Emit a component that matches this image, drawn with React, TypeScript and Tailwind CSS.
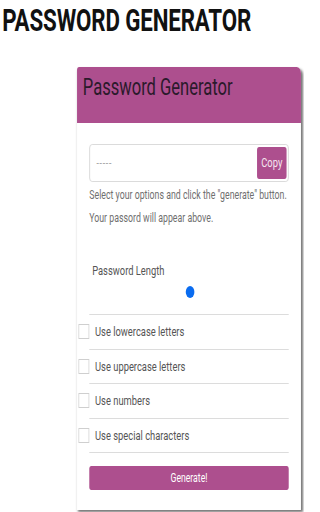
import React from "react";

const options = [
  "Use lowercase letters",
  "Use uppercase letters",
  "Use numbers",
  "Use special characters",
];

export default function App() {
  return (
    <div className="w-[304px] h-[512px] overflow-hidden bg-white" style={{ fontFamily: "Roboto, 'Liberation Sans', sans-serif" }}>
      <div className="w-[422px] origin-top-left scale-x-[0.72]">
        <h1 className="pl-[3px] pt-[1px] h-[40px] text-[31px] leading-[40px] font-bold text-[#111] tracking-[-0.2px]">
          PASSWORD GENERATOR
        </h1>
        <div className="ml-[107px] mt-[27px] w-[311px] bg-white rounded-tr-[6px] rounded-tl-[3px] shadow-[2px_2px_3px_rgba(0,0,0,0.55)] pb-[20px]">
          <div className="h-[56px] bg-[#ad4f8e] rounded-tr-[6px] rounded-tl-[3px] pl-[8px] pt-[6px] text-[23px] leading-[30px] text-[#2b1a2b]">
            Password Generator
          </div>
          <div className="px-[17px] pt-[21px]">
            <div className="relative h-[38px] border border-[#d5d5d5] rounded-[4px] flex items-center pl-[9px]">
              <span className="text-[12px] text-[#aaa] tracking-[1px]">-----</span>
              <button className="absolute right-[2px] top-[2px] w-[41px] h-[32px] bg-[#ad4f8e] rounded-[3px] text-[#f4e6f0] text-[13px]">
                Copy
              </button>
            </div>
            <p className="mt-[2px] text-[12.2px] leading-[23px] text-[#6f6f6f] whitespace-nowrap">
              Select your options and click the "generate" button.
              <br />
              Your passord will appear above.
            </p>
            <div className="mt-[31px] pl-[4px] h-[20px] text-[13px] leading-[20px] text-[#555]">Password Length</div>
            <div className="mt-[5px] h-[12px] flex">
              <div className="ml-[134px] w-[12px] h-[12px] rounded-full bg-[#0a6cf0]" />
            </div>
            <div className="mt-[16px] border-t border-[#dcdcdc]" />
            {options.map((o) => (
              <div key={o} className="h-[34.5px] border-b border-[#dcdcdc] flex items-center">
                <div className="-ml-[15px] w-[15px] h-[15px] border border-[#cfcfcf] bg-white" />
                <span className="ml-[8px] text-[13px] text-[#555]">{o}</span>
              </div>
            ))}
            <button className="mt-[13px] w-full h-[24px] bg-[#ad4f8e] rounded-[3px] text-white text-[12px] leading-[24px]">
              Generate!
            </button>
          </div>
        </div>
      </div>
    </div>
  );
}
